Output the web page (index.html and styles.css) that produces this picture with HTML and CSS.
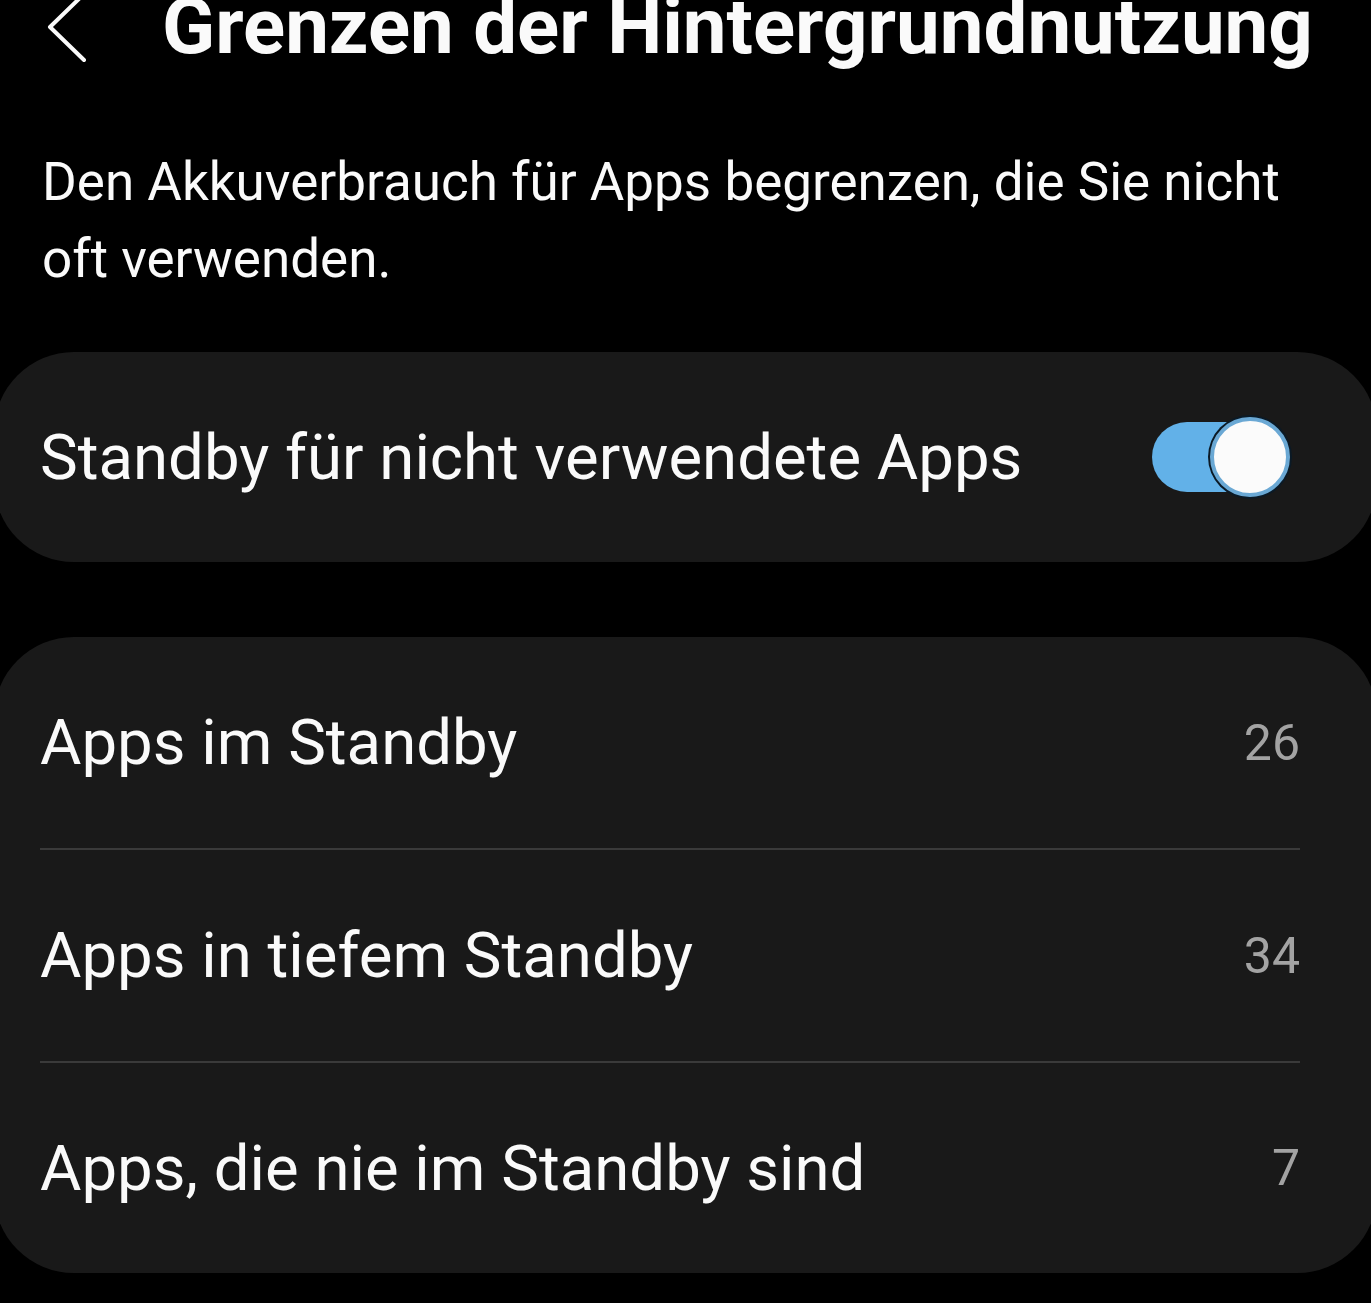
FILE: index.html
```html
<!DOCTYPE html>
<html lang="de">

<head>
  <title>Grenzen der Hintergrundnutzung</title>
  <meta charset="utf-8">
  <meta name="viewport" content="width=device-width, initial-scale=1">
  <link rel="stylesheet" href="styles.css">
</head>

<body>
  <header class="topbar">
    <button class="back" aria-label="Zurück">
      <svg width="44" height="72" viewBox="0 0 44 72">
        <polyline points="38,3 4,36 38,69" fill="none" stroke="#fafafa" stroke-width="4" stroke-linecap="round" stroke-linejoin="round" />
      </svg>
    </button>
    <h1>Grenzen der Hintergrundnutzung</h1>
  </header>

  <p class="intro">Den Akkuverbrauch für Apps begrenzen, die Sie nicht oft verwenden.</p>

  <section class="card">
    <div class="row">
      <span class="label">Standby für nicht verwendete Apps</span>
      <span class="switch on"><span class="knob"></span></span>
    </div>
  </section>

  <section class="card list">
    <div class="row">
      <span class="label">Apps im Standby</span>
      <span class="count">26</span>
    </div>
    <div class="row">
      <span class="label">Apps in tiefem Standby</span>
      <span class="count">34</span>
    </div>
    <div class="row">
      <span class="label">Apps, die nie im Standby sind</span>
      <span class="count">7</span>
    </div>
  </section>
</body>

</html>
```

FILE: styles.css
```css
body {
  margin: 0;
  background: #000;
  color: #fafafa;
  font-family: Roboto, "Noto Sans", sans-serif;
  overflow: hidden;
}

.topbar {
  display: flex;
  align-items: center;
  height: 80px;
  margin-top: -13px;
}

.back {
  display: flex;
  width: 162px;
  padding: 0 0 0 46px;
  background: none;
  border: 0;
}

.topbar h1 {
  margin: 0;
  font-size: 78px;
  font-weight: 700;
  line-height: 80px;
  white-space: nowrap;
}

.intro {
  margin: 77px 40px 54px 42px;
  font-size: 53px;
  line-height: 77px;
}

.card {
  margin: 0 -6px 75px;
  padding: 0 77px 0 46px;
  background: #191919;
  border-radius: 80px;
}

.row {
  display: flex;
  align-items: center;
  justify-content: space-between;
  height: 210px;
}

.list .row {
  height: 211px;
  border-bottom: 2px solid #3a3a3a;
}

.list .row:last-child {
  height: 210px;
  border-bottom: 0;
}

.label {
  font-size: 63.5px;
}

.count {
  font-size: 50px;
  color: #a3a3a3;
}

.switch {
  position: relative;
  width: 136px;
  height: 70px;
  margin-right: 12px;
  border-radius: 35px;
  background: #62b1e8;
}

.knob {
  position: absolute;
  top: -5px;
  right: -2px;
  width: 72px;
  height: 72px;
  border: 4px solid #6aa8d4;
  border-radius: 50%;
  background: #fbfbfb;
  box-shadow: 0 0 0 2px #0b1a26;
}
```
